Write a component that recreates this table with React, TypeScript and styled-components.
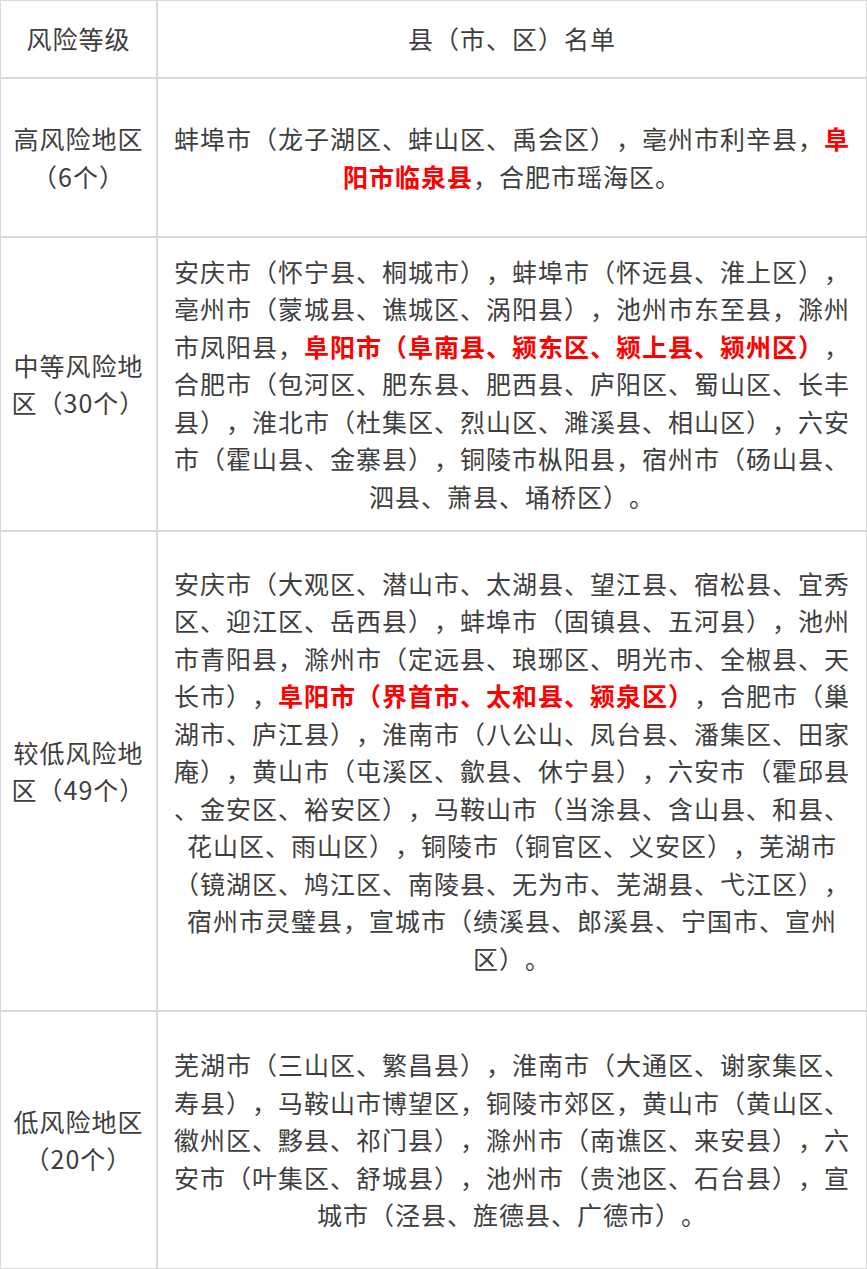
import styled, { createGlobalStyle } from 'styled-components';

const GlobalStyle = createGlobalStyle`
  body {
    margin: 0;
    background: #ffffff;
  }
`;

const Table = styled.table`
  width: 867px;
  table-layout: fixed;
  border-collapse: separate;
  border-spacing: 0;
  font-family: "Noto Sans CJK SC", "Noto Sans", sans-serif;
  font-size: 25px;
  line-height: 37.5px;
  letter-spacing: 1px;
  text-spacing-trim: space-all;
  color: #3e3e3e;
`;

const LevelCol = styled.col`
  width: 157px;
`;

const Row = styled.tr<{ $height: number }>`
  height: ${(p) => p.$height}px;
`;

const Cell = styled.td`
  border: 1px solid #d9d9d9;
  padding: 0;
  text-align: center;
  vertical-align: middle;
  white-space: nowrap;
`;

const Line = styled.span`
  display: block;
`;

const Hl = styled.span`
  color: #ff0000;
  font-weight: 700;
`;

type RiskRow = {
  height: number;
  level: string[];
  list: string[];
};

// red parts are wrapped in *...*
const rows: RiskRow[] = [
  {
    height: 159,
    level: ['高风险地区', '（6个）'],
    list: [
      '蚌埠市（龙子湖区、蚌山区、禹会区），亳州市利辛县，*阜*',
      '*阳市临泉县*，合肥市瑶海区。',
    ],
  },
  {
    height: 294,
    level: ['中等风险地', '区（30个）'],
    list: [
      '安庆市（怀宁县、桐城市），蚌埠市（怀远县、淮上区），',
      '亳州市（蒙城县、谯城区、涡阳县），池州市东至县，滁州',
      '市凤阳县，*阜阳市（阜南县、颍东区、颍上县、颍州区）*，',
      '合肥市（包河区、肥东县、肥西县、庐阳区、蜀山区、长丰',
      '县），淮北市（杜集区、烈山区、濉溪县、相山区），六安',
      '市（霍山县、金寨县），铜陵市枞阳县，宿州市（砀山县、',
      '泗县、萧县、埇桥区）。',
    ],
  },
  {
    height: 480,
    level: ['较低风险地', '区（49个）'],
    list: [
      '安庆市（大观区、潜山市、太湖县、望江县、宿松县、宜秀',
      '区、迎江区、岳西县），蚌埠市（固镇县、五河县），池州',
      '市青阳县，滁州市（定远县、琅琊区、明光市、全椒县、天',
      '长市），*阜阳市（界首市、太和县、颍泉区）*，合肥市（巢',
      '湖市、庐江县），淮南市（八公山、凤台县、潘集区、田家',
      '庵），黄山市（屯溪区、歙县、休宁县），六安市（霍邱县',
      '、金安区、裕安区），马鞍山市（当涂县、含山县、和县、',
      '花山区、雨山区），铜陵市（铜官区、义安区），芜湖市',
      '（镜湖区、鸠江区、南陵县、无为市、芜湖县、弋江区），',
      '宿州市灵璧县，宣城市（绩溪县、郎溪县、宁国市、宣州',
      '区）。',
    ],
  },
  {
    height: 258,
    level: ['低风险地区', '（20个）'],
    list: [
      '芜湖市（三山区、繁昌县），淮南市（大通区、谢家集区、',
      '寿县），马鞍山市博望区，铜陵市郊区，黄山市（黄山区、',
      '徽州区、黟县、祁门县），滁州市（南谯区、来安县），六',
      '安市（叶集区、舒城县），池州市（贵池区、石台县），宣',
      '城市（泾县、旌德县、广德市）。',
    ],
  },
];

function renderLine(text: string) {
  return text.split('*').map((part, i) =>
    i % 2 === 1 ? <Hl key={i}>{part}</Hl> : part,
  );
}

export default function App() {
  return (
    <>
      <GlobalStyle />
      <Table>
        <colgroup>
          <LevelCol />
          <col />
        </colgroup>
        <tbody>
          <Row $height={78}>
            <Cell>风险等级</Cell>
            <Cell>县（市、区）名单</Cell>
          </Row>
          {rows.map((row) => (
            <Row key={row.level[0]} $height={row.height}>
              <Cell>
                {row.level.map((l) => (
                  <Line key={l}>{l}</Line>
                ))}
              </Cell>
              <Cell>
                {row.list.map((l, i) => (
                  <Line key={i}>{renderLine(l)}</Line>
                ))}
              </Cell>
            </Row>
          ))}
        </tbody>
      </Table>
    </>
  );
}
